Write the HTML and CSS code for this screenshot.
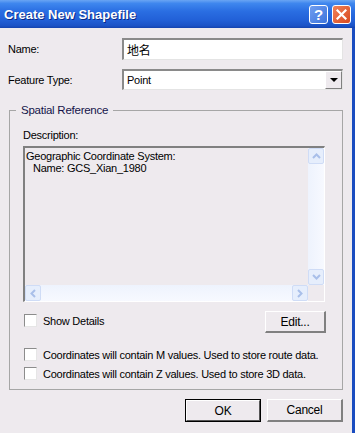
FILE: index.html
```html
<!DOCTYPE html>
<html lang="en">
<head>
    <meta charset="UTF-8">
    <title>Create New Shapefile</title>
    <link rel="stylesheet" href="styles.css">
</head>
<body>
    <div class="window">
        <!-- Titelleiste -->
        <div class="titlebar">
            <span class="title">Create New Shapefile</span>
            <div class="caption-buttons">
                <div class="cap-btn help">?</div>
                <div class="cap-btn close">
                    <svg width="11" height="11" viewBox="0 0 11 11">
                        <path d="M1.5 1.5 L9.5 9.5 M9.5 1.5 L1.5 9.5" stroke="#fff" stroke-width="2.2" stroke-linecap="square"/>
                    </svg>
                </div>
            </div>
        </div>

        <div class="frame">
            <div class="dialog">
                <div class="form-row">
                    <label class="label">Name:</label>
                    <div class="input">地名</div>
                </div>
                <div class="form-row second">
                    <label class="label">Feature Type:</label>
                    <div class="input combo">
                        <span>Point</span>
                        <div class="drop-btn"><span class="tri"></span></div>
                    </div>
                </div>

                <fieldset class="group">
                    <legend>Spatial Reference</legend>
                    <div class="group-body">
                        <div class="desc-label">Description:</div>
                        <div class="desc-box">
                            <div class="desc-text">
                                <div>Geographic Coordinate System:</div>
                                <div class="indent">Name: GCS_Xian_1980</div>
                            </div>
                            <div class="vscroll">
                                <div class="sb-btn"><svg width="9" height="6" viewBox="0 0 9 6"><path d="M1 5 L4.5 1.5 L8 5" fill="none" stroke="#a9bfe9" stroke-width="2"/></svg></div>
                                <div class="sb-track"></div>
                                <div class="sb-btn"><svg width="9" height="6" viewBox="0 0 9 6"><path d="M1 1 L4.5 4.5 L8 1" fill="none" stroke="#a9bfe9" stroke-width="2"/></svg></div>
                            </div>
                            <div class="hscroll">
                                <div class="sb-btn"><svg width="6" height="9" viewBox="0 0 6 9"><path d="M5 1 L1.5 4.5 L5 8" fill="none" stroke="#a9bfe9" stroke-width="2"/></svg></div>
                                <div class="sb-track"></div>
                                <div class="sb-btn"><svg width="6" height="9" viewBox="0 0 6 9"><path d="M1 1 L4.5 4.5 L1 8" fill="none" stroke="#a9bfe9" stroke-width="2"/></svg></div>
                            </div>
                            <div class="corner"></div>
                        </div>

                        <div class="details-row">
                            <div class="check-item details">
                                <span class="checkbox"></span>
                                <span>Show Details</span>
                            </div>
                            <div class="button edit">Edit...</div>
                        </div>

                        <div class="check-item m-row">
                            <span class="checkbox"></span>
                            <span>Coordinates will contain M values. Used to store route data.</span>
                        </div>
                        <div class="check-item z-row">
                            <span class="checkbox"></span>
                            <span>Coordinates will contain Z values. Used to store 3D data.</span>
                        </div>
                    </div>
                </fieldset>

                <div class="button-row">
                    <div class="button default">OK</div>
                    <div class="button">Cancel</div>
                </div>
            </div>
            <div class="frame-right"></div>
        </div>
    </div>
</body>
</html>
```

FILE: styles.css
```css
body {
    margin: 0;
    padding: 0;
    background: #eeeaee;
    font-family: "Liberation Sans", Arial, sans-serif;
    font-size: 11px;
    letter-spacing: -0.25px;
    color: #000;
}

.window {
    width: 355px;
    height: 433px;
    display: flex;
    flex-direction: column;
    overflow: hidden;
}

.titlebar {
    height: 28px;
    display: flex;
    align-items: center;
    justify-content: space-between;
    background: linear-gradient(#6aa5f3 0%, #3f87ee 12%, #2a6ee2 40%, #2261d8 70%, #1b52c6 92%, #1443ae 100%);
}

.title {
    padding-left: 4px;
    color: #fff;
    font-weight: bold;
    font-size: 13px;
    letter-spacing: 0;
    text-shadow: 1px 1px 0 #0a2a86;
}

.caption-buttons {
    display: flex;
    gap: 4px;
    padding-right: 4px;
}

.cap-btn {
    width: 19px;
    height: 19px;
    box-sizing: border-box;
    border: 1px solid #fff;
    border-radius: 3px;
    display: flex;
    align-items: center;
    justify-content: center;
}

.cap-btn.help {
    background: linear-gradient(135deg, #6f9ef0, #3e74dc);
    color: #fff;
    font-weight: bold;
    font-size: 15px;
}

.cap-btn.close {
    background: linear-gradient(135deg, #f0825a, #d9491f);
}

.frame {
    flex: 1;
    display: flex;
}

.dialog {
    flex: 1;
    padding: 10px 9px 0 8px;
}

.frame-right {
    width: 3px;
    background: #1a4cc0;
}

.form-row {
    display: grid;
    grid-template-columns: 114px 1fr;
    align-items: center;
}

.form-row.second {
    margin-top: 9px;
}

.input {
    height: 22px;
    box-sizing: border-box;
    background: #fff;
    border-style: solid;
    border-width: 2px 1px 1px 2px;
    border-color: #8a8a8a #e4e4e4 #e4e4e4 #8a8a8a;
    padding-left: 3px;
    display: flex;
    align-items: center;
    font-family: "Liberation Sans", "Noto Sans CJK SC", sans-serif;
    font-size: 12px;
}

.combo {
    height: 21px;
    justify-content: space-between;
    font-size: 11px;
}

.drop-btn {
    width: 17px;
    height: 18px;
    box-sizing: border-box;
    background: #eeeaee;
    border-style: solid;
    border-width: 1px;
    border-color: #fff #808080 #808080 #fff;
    display: flex;
    align-items: center;
    justify-content: center;
}

.tri {
    width: 0;
    height: 0;
    border-left: 4px solid transparent;
    border-right: 4px solid transparent;
    border-top: 4px solid #000;
}

.group {
    margin: 13px 0 0 1px;
    padding: 0;
    border: 1px solid #a6a6a6;
    min-width: 0;
}

.group legend {
    margin-left: 6px;
    padding: 0 5px;
    line-height: 14px;
    font-size: 11.5px;
    color: #14144a;
}

.group-body {
    padding: 12px 17px 8px 13px;
}

.desc-label {
    line-height: 12px;
}

.desc-box {
    margin-top: 5px;
    height: 156px;
    box-sizing: border-box;
    border-style: solid;
    border-width: 2px 1px 1px 2px;
    border-color: #808080 #fff #fff #808080;
    display: grid;
    grid-template-columns: 1fr 16px;
    grid-template-rows: 1fr 16px;
}

.desc-text {
    padding: 2px 0 0 1px;
    line-height: 12px;
}

.indent {
    padding-left: 7px;
}

.vscroll,
.hscroll {
    display: flex;
    background: linear-gradient(to right, #eef3fd, #f7f9ff);
}

.vscroll {
    flex-direction: column;
}

.hscroll {
    background: linear-gradient(#eef3fd, #f7f9ff);
}

.sb-btn {
    width: 16px;
    height: 16px;
    box-sizing: border-box;
    border: 1px solid #cfdcf6;
    border-radius: 2px;
    background: #e6eefc;
    display: flex;
    align-items: center;
    justify-content: center;
}

.sb-track {
    flex: 1;
}

.corner {
    background: #eeeaee;
}

.details-row {
    margin-top: 9px;
    height: 22px;
    display: flex;
    align-items: flex-start;
    justify-content: space-between;
}

.check-item {
    display: flex;
    align-items: center;
    gap: 6px;
    height: 15px;
    padding-left: 1px;
    white-space: nowrap;
}

.check-item.details {
    margin-top: 2px;
}

.checkbox {
    width: 13px;
    height: 13px;
    flex-shrink: 0;
    box-sizing: border-box;
    background: #fff;
    border-style: solid;
    border-width: 1px;
    border-color: #8c8c8c #e6e6e6 #e6e6e6 #8c8c8c;
}

.m-row {
    margin-top: 14px;
}

.z-row {
    margin-top: 4px;
}

.button {
    height: 23px;
    width: 76px;
    box-sizing: border-box;
    background: #eeeaee;
    border-style: solid;
    border-width: 1px 2px 2px 1px;
    border-color: #fff #808080 #808080 #fff;
    display: flex;
    align-items: center;
    justify-content: center;
    font-size: 12px;
}

.button.edit {
    width: 61px;
    height: 22px;
    margin-right: -1px;
}

.button.default {
    outline: 1px solid #000;
    outline-offset: -1px;
    border-width: 2px 2px 2px 2px;
    border-color: #fff #555 #555 #fff;
}

.button-row {
    margin-top: 9px;
    display: flex;
    justify-content: flex-end;
    gap: 6px;
}
```
